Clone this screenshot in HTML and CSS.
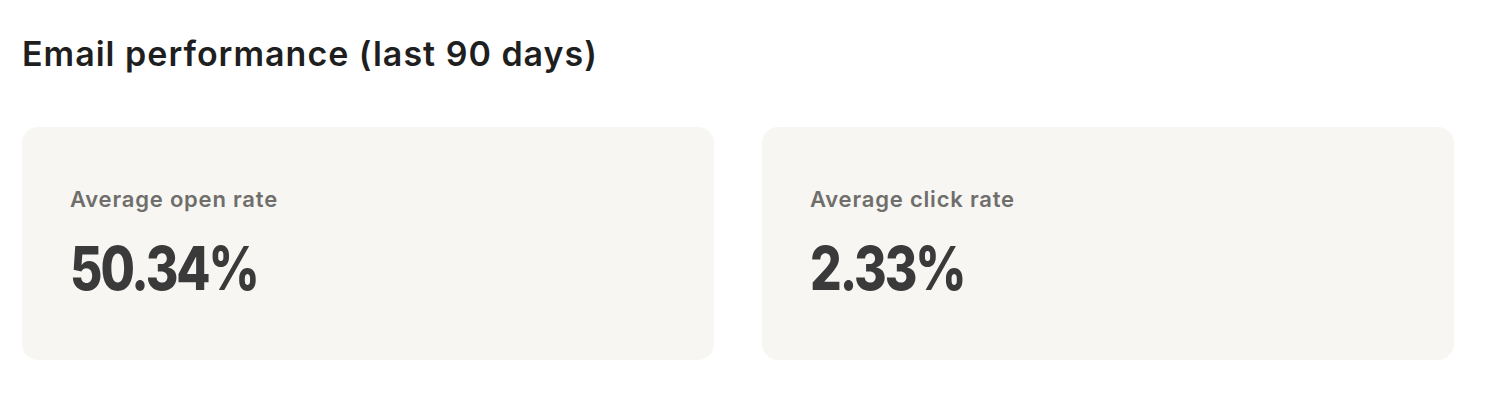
FILE: index.html
```html
<!DOCTYPE html>
<html>
<head>
<meta charset="utf-8">
<link rel="stylesheet" href="styles.css">
</head>
<body>
<section class="perf">
  <h2 class="perf-title">Email performance (last 90 days)</h2>
  <div class="cards">
    <div class="card">
      <div class="card-label">Average open rate</div>
      <div class="card-value"><span class="num">50.34%</span></div>
    </div>
    <div class="card">
      <div class="card-label">Average click rate</div>
      <div class="card-value"><span class="num">2.33%</span></div>
    </div>
  </div>
</section>
</body>
</html>
```
FILE: styles.css
```css
html, body {
  margin: 0;
  padding: 0;
  background: #ffffff;
}
body {
  font-family: Inter, "Noto Sans", sans-serif;
}
.perf {
  padding: 30px 32px 0 22px;
}
.perf-title {
  margin: 0;
  font-size: 34px;
  font-weight: 600;
  line-height: 48px;
  color: #1f1f1f;
  letter-spacing: 1px;
}
.cards {
  display: grid;
  grid-template-columns: 1fr 1fr;
  gap: 48px;
  margin-top: 49px;
}
.card {
  background: #f7f6f3;
  border-radius: 16px;
  height: 233px;
  box-sizing: border-box;
  padding: 56px 48px 0 48px;
}
.card-label {
  font-size: 22px;
  font-weight: 600;
  color: #6f6e6b;
  line-height: 32px;
  letter-spacing: 0.8px;
}
.card-value {
  margin-top: 17px;
  font-size: 60px;
  font-weight: 800;
  line-height: 72px;
  color: #3a3a3a;
}
.num {
  display: inline-block;
  letter-spacing: -2.5px;
  transform: scaleX(0.83);
  transform-origin: left center;
}
```
